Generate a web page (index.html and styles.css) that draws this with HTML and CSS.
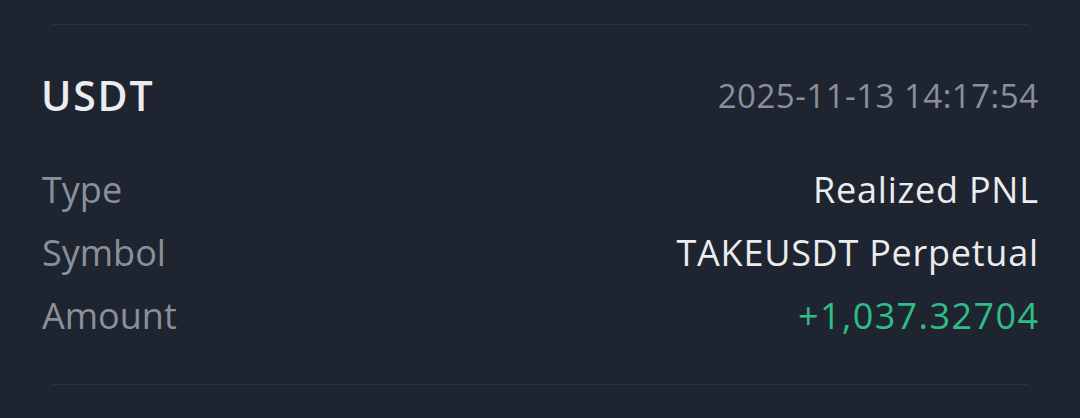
FILE: index.html
```html
<!DOCTYPE html>
<html>
<head>
<meta charset="utf-8">
<link rel="stylesheet" href="styles.css">
</head>
<body>
<div class="divider"></div>
<section class="card">
  <div class="header">
    <span class="asset">USDT</span>
    <span class="time">2025-11-13 14:17:54</span>
  </div>
  <div class="rows">
    <div class="row"><span class="label">Type</span><span class="value">Realized PNL</span></div>
    <div class="row"><span class="label">Symbol</span><span class="value">TAKEUSDT Perpetual</span></div>
    <div class="row"><span class="label">Amount</span><span class="value positive">+1,037.32704</span></div>
  </div>
</section>
<div class="divider"></div>
</body>
</html>
```
FILE: styles.css
```css
html, body {
  margin: 0;
  padding: 0;
  background: #1f2530;
  font-family: "Open Sans", "Liberation Sans", sans-serif;
}
body {
  width: 1080px;
  height: 418px;
  overflow: hidden;
  padding-top: 24px;
  box-sizing: border-box;
}
.divider {
  height: 1px;
  margin: 0 52px;
  background: #2c323d;
}
.card {
  padding: 0 42px;
  height: 359px;
  box-sizing: border-box;
}
.header {
  display: flex;
  justify-content: space-between;
  align-items: flex-start;
  height: 133px;
}
.asset {
  font-size: 41px;
  font-weight: 600;
  color: #eaecef;
  line-height: 141px;
  letter-spacing: 1.8px;
  margin-left: -1px;
}
.time {
  font-size: 33px;
  color: #8a909a;
  line-height: 142px;
  letter-spacing: 0.5px;
  margin-right: -0.5px;
}
.row {
  display: flex;
  justify-content: space-between;
  line-height: 63px;
  font-size: 36px;
}
.label { color: #8a909a; }
.value {
  color: #eaecef;
  letter-spacing: 0.75px;
  margin-right: -0.75px;
}
.positive {
  color: #2ebd85;
  letter-spacing: 1.4px;
  margin-right: -1.4px;
}
```
